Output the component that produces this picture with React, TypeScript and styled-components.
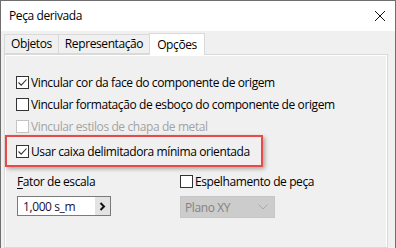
import styled, { createGlobalStyle } from "styled-components";

const GlobalStyle = createGlobalStyle`
  html, body {
    margin: 0;
    padding: 0;
    background: #f0f0f0;
  }
  body {
    font-family: "Segoe UI", "Open Sans", "Noto Sans", sans-serif;
    font-size: 12px;
    letter-spacing: -0.4px;
    color: #000;
  }
`;

const Window = styled.div`
  width: 396px;
  height: 248px;
  box-sizing: border-box;
  border: 1px solid #6f6f6f;
  border-bottom: none;
  background: #f0f0f0;
  overflow: hidden;
  display: flex;
  flex-direction: column;
`;

const TitleBar = styled.div`
  height: 30px;
  flex: none;
  background: #fff;
  display: flex;
  align-items: center;
  justify-content: space-between;
  padding: 0 9px 0 8px;
`;

const Title = styled.span`
  font-size: 12px;
  margin-top: -2px;
`;

const CloseIcon = () => (
  <svg width="12" height="12" viewBox="0 0 12 12">
    <path d="M1 1 L11 11 M11 1 L1 11" stroke="#111" strokeWidth="1" fill="none" />
  </svg>
);

const Body = styled.div`
  flex: 1;
  display: flex;
  flex-direction: column;
  padding: 2px 7px 0 3px;
`;

const TabRow = styled.div`
  display: flex;
  align-items: flex-end;
  height: 21px;
  position: relative;
  z-index: 1;
`;

const Tab = styled.div<{ $active?: boolean }>`
  box-sizing: border-box;
  height: ${(p) => (p.$active ? "22px" : "20px")};
  margin-bottom: ${(p) => (p.$active ? "-1px" : "0")};
  padding: 0 ${(p) => (p.$active ? "7px" : "6px")};
  border: 1px solid #d9d9d9;
  border-bottom: ${(p) => (p.$active ? "none" : "1px solid #d9d9d9")};
  margin-left: -1px;
  background: ${(p) => (p.$active ? "#fff" : "#f0f0f0")};
  display: flex;
  align-items: center;
  line-height: 1;
  &:first-child {
    margin-left: 0;
  }
`;

const Panel = styled.div`
  flex: 1;
  border: 1px solid #d9d9d9;
  box-shadow: inset 1px 1px 0 #fff, inset -1px 0 0 #fff;
  background: #f0f0f0;
  padding-top: 16px;
  display: flex;
  flex-direction: column;
`;

const Row = styled.label<{ $disabled?: boolean; $indent?: number }>`
  display: flex;
  align-items: center;
  height: 22px;
  padding-left: ${(p) => p.$indent ?? 11}px;
  gap: 2px;
  white-space: nowrap;
  color: ${(p) => (p.$disabled ? "#a3a3a3" : "#000")};
`;

const Box = styled.span<{ $disabled?: boolean }>`
  box-sizing: border-box;
  width: 13px;
  height: 13px;
  flex: none;
  border: 1px solid ${(p) => (p.$disabled ? "#c4c4c4" : "#333")};
  background: #fff;
  display: flex;
  align-items: center;
  justify-content: center;
`;

const Highlight = styled.div`
  box-sizing: border-box;
  width: 258px;
  height: 32px;
  margin-top: -2px;
  border: 2px solid #ec4848;
  box-shadow: 2px 2px 4px rgba(0, 0, 0, 0.3);
  display: flex;
  align-items: center;
`;

const Lower = styled.div`
  display: flex;
  margin-top: 3px;
  padding-left: 12px;
`;

const Column = styled.div<{ $width: number }>`
  width: ${(p) => p.$width}px;
  display: flex;
  flex-direction: column;
`;

const FieldLabel = styled.div`
  height: 22px;
  display: flex;
  align-items: center;
  u {
    text-decoration: underline;
    text-underline-offset: 2px;
  }
`;

const Input = styled.div`
  box-sizing: border-box;
  margin-top: 4px;
  width: 94px;
  height: 20px;
  border: 1px solid #7a7a7a;
  background: #fff;
  display: flex;
  align-items: stretch;
`;

const InputText = styled.span`
  flex: 1;
  padding-left: 5px;
  display: flex;
  align-items: center;
  color: #1a1030;
`;

const ArrowButton = styled.span`
  width: 15px;
  background: #e3e3e3;
  display: flex;
  align-items: center;
  justify-content: center;
`;

const Select = styled.div`
  box-sizing: border-box;
  margin-top: 4px;
  width: 95px;
  height: 22px;
  border: 1px solid #c6c6c6;
  background: #cccccc;
  color: #838383;
  display: flex;
  align-items: center;
  justify-content: space-between;
  padding: 0 6px 0 4px;
`;

const Check = () => (
  <svg width="11" height="11" viewBox="0 0 11 11">
    <path d="M1.5 5.5 L4.2 8.2 L9.5 2.5" stroke="#333" strokeWidth="1.1" fill="none" />
  </svg>
);

const Chevron = () => (
  <svg width="7" height="9" viewBox="0 0 7 9">
    <path d="M1.5 1 L5 4.5 L1.5 8" stroke="#111" strokeWidth="2" fill="none" />
  </svg>
);

const DownChevron = () => (
  <svg width="10" height="6" viewBox="0 0 10 6">
    <path d="M0.5 0.5 L5 5 L9.5 0.5" stroke="#aaa" strokeWidth="1" fill="none" />
  </svg>
);

const CheckRow = ({
  label,
  checked,
  disabled,
  indent,
}: {
  label: string;
  checked?: boolean;
  disabled?: boolean;
  indent?: number;
}) => (
  <Row $disabled={disabled} $indent={indent}>
    <Box $disabled={disabled}>{checked && <Check />}</Box>
    <span>{label}</span>
  </Row>
);

export default function App() {
  return (
    <>
      <GlobalStyle />
      <Window>
        <TitleBar>
          <Title>Peça derivada</Title>
          <CloseIcon />
        </TitleBar>
        <Body>
          <TabRow>
            <Tab>Objetos</Tab>
            <Tab>Representação</Tab>
            <Tab $active>Opções</Tab>
          </TabRow>
          <Panel>
            <CheckRow label="Vincular cor da face do componente de origem" checked />
            <CheckRow label="Vincular formatação de esboço do componente de origem" />
            <CheckRow label="Vincular estilos de chapa de metal" disabled />
            <Highlight>
              <CheckRow label="Usar caixa delimitadora mínima orientada" checked indent={9} />
            </Highlight>
            <Lower>
              <Column $width={163}>
                <FieldLabel>
                  <span>
                    <u>F</u>ator de escala
                  </span>
                </FieldLabel>
                <Input>
                  <InputText>1,000 s_m</InputText>
                  <ArrowButton>
                    <Chevron />
                  </ArrowButton>
                </Input>
              </Column>
              <Column $width={180}>
                <CheckRow label="Espelhamento de peça" indent={0} />
                <Select>
                  <span>Plano XY</span>
                  <DownChevron />
                </Select>
              </Column>
            </Lower>
          </Panel>
        </Body>
      </Window>
    </>
  );
}
